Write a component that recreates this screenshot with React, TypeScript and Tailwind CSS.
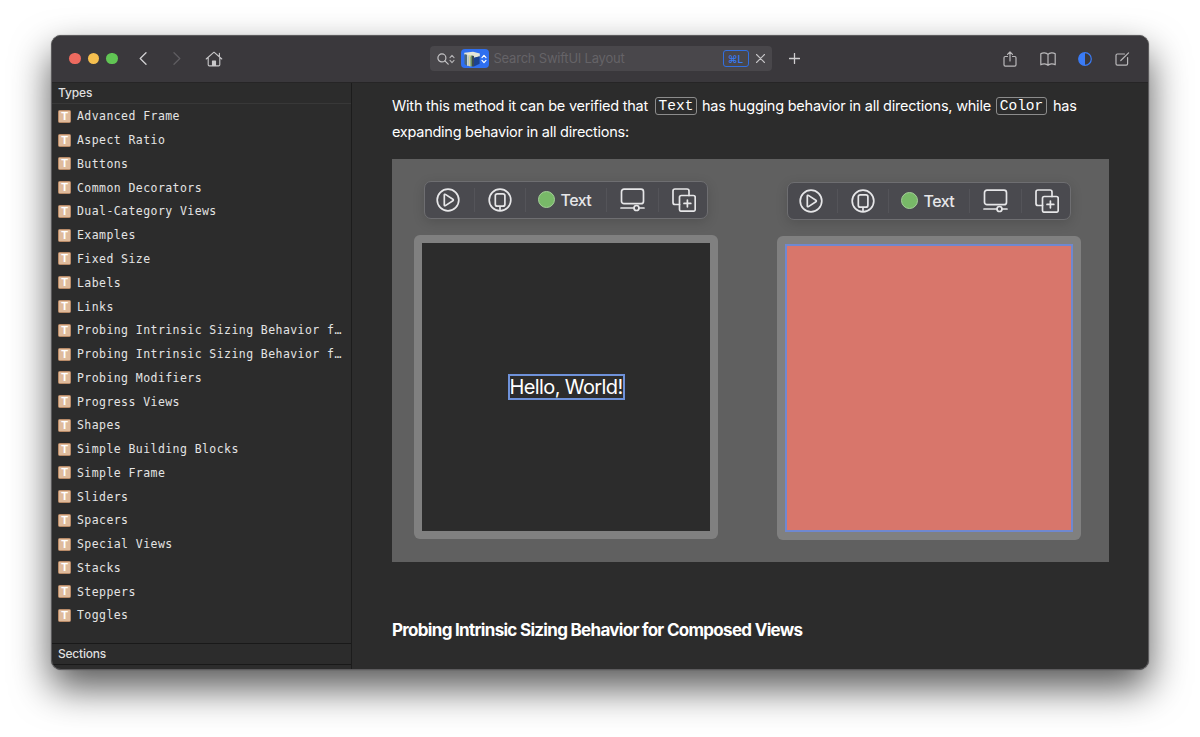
import type { ReactNode } from 'react';

const types = [
  'Advanced Frame',
  'Aspect Ratio',
  'Buttons',
  'Common Decorators',
  'Dual-Category Views',
  'Examples',
  'Fixed Size',
  'Labels',
  'Links',
  'Probing Intrinsic Sizing Behavior f…',
  'Probing Intrinsic Sizing Behavior f…',
  'Probing Modifiers',
  'Progress Views',
  'Shapes',
  'Simple Building Blocks',
  'Simple Frame',
  'Sliders',
  'Spacers',
  'Special Views',
  'Stacks',
  'Steppers',
  'Toggles',
];

function Stepper({ className }: { className: string }) {
  return (
    <svg className={className} viewBox="0 0 6 10" fill="none" stroke="currentColor" strokeWidth="1.2" strokeLinecap="round" strokeLinejoin="round">
      <path d="M1 3.6 3 1.4l2 2.2M1 6.4l2 2.2 2-2.2" />
    </svg>
  );
}

function TitleBar() {
  return (
    <div className="flex h-[47px] shrink-0 items-center border-b border-[#262526] bg-[#3a383c]">
      <div className="ml-[17px] flex gap-[7px]">
        <div className="h-[11.5px] w-[11.5px] rounded-full bg-[#ed6a5f]" />
        <div className="h-[11.5px] w-[11.5px] rounded-full bg-[#f5bf4f]" />
        <div className="h-[11.5px] w-[11.5px] rounded-full bg-[#61c554]" />
      </div>
      <svg className="ml-[21px] h-[13px] w-[8px] text-[#d2d1d3]" viewBox="0 0 8 13" fill="none" stroke="currentColor" strokeWidth="1.3" strokeLinecap="round" strokeLinejoin="round">
        <path d="M7 .8 1.2 6.5 7 12.2" />
      </svg>
      <svg className="ml-[26px] h-[13px] w-[8px] text-[#5f5d61]" viewBox="0 0 8 13" fill="none" stroke="currentColor" strokeWidth="1.3" strokeLinecap="round" strokeLinejoin="round">
        <path d="M1 .8 6.8 6.5 1 12.2" />
      </svg>
      <svg className="ml-[24.5px] h-4 w-[18px] text-[#c9c8ca]" viewBox="0 0 18 16" fill="none" stroke="currentColor" strokeWidth="1.1" strokeLinecap="round" strokeLinejoin="round">
        <path d="M1.2 8 9 1.2 16.8 8M3.2 6.6v7.2c0 .7.4 1.1 1.1 1.1h9.4c.7 0 1.1-.4 1.1-1.1V6.6M14.4 5.6V2.3" />
        <path d="M7.5 14.5V10h3v4.5z" fill="currentColor" />
      </svg>

      <div className="ml-[206.5px] flex h-[25px] w-[342px] items-center rounded-[4px] bg-[#49474b]">
        <svg className="ml-[7px] h-3 w-3 text-[#c4c3c5]" viewBox="0 0 12 12" fill="none" stroke="currentColor" strokeWidth="1.2" strokeLinecap="round">
          <circle cx="4.9" cy="4.9" r="4" />
          <path d="m7.9 7.9 3.3 3.3" />
        </svg>
        <Stepper className="h-[10px] w-[6px] text-[#b0afb1]" />
        <div className="ml-[6px] flex h-[19px] w-[28px] items-center rounded-[4px] bg-[#2f6ff0]">
          {/* row of books */}
          <svg className="ml-[3px] h-4 w-4" viewBox="0 0 16 16">
            <path d="M.3 1.800 9 .8l6.800 1.600v3L9.500 7 .3 4z" fill="#e4e6d8" />
            <path d="M.5 3 3 3.800v11L.5 13z" fill="#4d6878" />
            <path d="m3 3.800 1.800.3v11L3 14.800z" fill="#c9d3d2" />
            <path d="m4.800 4.100 1.900.3v11l-1.900-.3z" fill="#dad594" />
            <path d="m6.700 4.400 1.300.2v10.800l-1.300-.1z" fill="#6f9458" />
            <path d="m8 4.600 2 .3v10.600l-2-.1z" fill="#3c4a56" />
            <path d="m10 6.800 5.600-1.500v7.400L10 15.500z" fill="#1b438f" />
          </svg>
          <Stepper className="ml-[1px] h-[10px] w-[6px] text-white" />
        </div>
        <span className="ml-[5px] w-[229px] whitespace-nowrap font-['Inter'] text-[13px] leading-none tracking-[-0.22px] text-[#656367]">
          Search SwiftUI Layout
        </span>
        <div className="flex h-[17px] w-[26px] items-center justify-center rounded-[3px] border border-[#326fdf] font-['Inter'] text-[10px] font-medium leading-none text-[#377bf5]">
          ⌘L
        </div>
        <svg className="ml-[7px] h-[9px] w-[9px] text-[#c4c3c5]" viewBox="0 0 9 9" stroke="currentColor" strokeWidth="1.1" strokeLinecap="round">
          <path d="m.5.5 8 8m0-8-8 8" />
        </svg>
      </div>
      <svg className="ml-[17px] h-[11px] w-[11px] text-[#cfced0]" viewBox="0 0 11 11" stroke="currentColor" strokeWidth="1.3" strokeLinecap="round">
        <path d="M5.5.5v10m-5-5h10" />
      </svg>

      <div className="ml-auto mr-[18px] flex items-center text-[#b9b8ba]">
        <svg className="h-4 w-[14px]" viewBox="0 0 14 16" fill="none" stroke="currentColor" strokeWidth="1.2" strokeLinecap="round" strokeLinejoin="round">
          <path d="M4.5 5.500H2.300c-.8 0-1.300.5-1.300 1.300v7c0 .8.5 1.300 1.300 1.300h9.400c.8 0 1.300-.5 1.300-1.300v-7c0-.8-.5-1.300-1.300-1.300H9.500M7 10V1M4.500 3.400 7 .9l2.500 2.500" />
        </svg>
        <svg className="ml-[23px] h-[14px] w-4" viewBox="0 0 16 14" fill="none" stroke="currentColor" strokeWidth="1.2" strokeLinecap="round" strokeLinejoin="round">
          <path d="M8 2.400C6.300.5 2.800.3.8 1.800v11c2.200-1.400 5.500-1.100 7.200.5 1.700-1.600 5-1.900 7.200-.5v-11C13.200.3 9.700.5 8 2.400zm0 0v10.900" />
        </svg>
        <svg className="ml-[22px] h-[14px] w-[14px] text-[#3a7bf6]" viewBox="0 0 14 14">
          <circle cx="7" cy="7" r="6.3" fill="none" stroke="currentColor" strokeWidth="1.2" />
          <path d="M7 .7a6.300 6.300 0 0 0 0 12.600z" fill="currentColor" />
        </svg>
        <svg className="ml-[23px] h-[14px] w-[15px]" viewBox="0 0 15 14" fill="none" stroke="currentColor" strokeWidth="1.2" strokeLinecap="round" strokeLinejoin="round">
          <path d="M9.500 2H2.400C1.500 2 1 2.500 1 3.400v8.400c0 .9.500 1.400 1.400 1.400h8.800c.9 0 1.400-.5 1.400-1.400V5.500M5.800 8.500 13.600.9" />
        </svg>
      </div>
    </div>
  );
}

function Sidebar() {
  return (
    <div className="flex w-[300px] shrink-0 flex-col border-r border-[#1c1c1c]">
      <div className="flex h-[21px] shrink-0 items-center border-b border-[#383838] pl-[6px] pt-[1px] font-['Inter'] text-[12px] font-medium tracking-[-0.1px] text-[#dfdfdf]">
        Types
      </div>
      <ul className="pt-[1px]">
        {types.map((name, i) => (
          <li key={i} className="flex h-[23.77px] items-center pl-[6px]">
            <span className="mr-[6px] flex h-[13px] w-[13px] shrink-0 items-center justify-center rounded-[1.5px] border border-[#b98b68] bg-[#dfbb9c] font-['Liberation_Sans'] text-[11px] font-bold leading-none text-white">
              T
            </span>
            <span className="whitespace-nowrap font-['DejaVu_Sans_Mono'] text-[11.5px] leading-4 tracking-[0.43px] text-[#e4e4e4]">
              {name}
            </span>
          </li>
        ))}
      </ul>
      <div className="mt-auto flex h-[22px] shrink-0 items-center border-y border-[#191919] pl-[6px] font-['Inter'] text-[12px] font-medium tracking-[-0.22px] text-[#dfdfdf]">
        Sections
      </div>
      <div className="h-[4px] shrink-0" />
    </div>
  );
}

function Separator() {
  return <div className="h-6 w-px bg-[#545459]" />;
}

function PreviewBar() {
  return (
    <div className="flex h-[38px] w-[284px] items-center rounded-[7px] border border-[#6e6e71] bg-[#4a4a4f] text-[#e6e6e8] shadow-[0_3px_12px_rgba(0,0,0,0.15)]">
      <svg className="ml-[11px] mr-[14px] h-6 w-6" viewBox="0 0 24 24" fill="none" stroke="currentColor" strokeWidth="1.7" strokeLinejoin="round">
        <circle cx="12" cy="12" r="10.8" />
        <path d="M8.300 7.100v9.800c0 .8.500 1 1.100.7l7.500-4.800c.6-.4.6-1.200 0-1.600L9.400 6.400c-.6-.3-1.100-.1-1.100.7z" />
      </svg>
      <Separator />
      <svg className="mx-[13px] h-6 w-6" viewBox="0 0 24 24" fill="none" stroke="currentColor" strokeWidth="1.7">
        <circle cx="12" cy="12" r="10.8" />
        <rect x="7.3" y="5.8" width="9.6" height="12.4" rx="2" />
        <path d="M12 18.200v4.600" />
      </svg>
      <Separator />
      <div className="ml-[11.5px] h-[17px] w-[17px] rounded-full border border-[#a4cf98] bg-[#78b968]" />
      <span className="ml-[6px] w-[45.5px] whitespace-nowrap font-['Inter'] text-[16px] font-medium leading-none tracking-[-0.55px]">Text</span>
      <Separator />
      <svg className="mx-[13px] h-6 w-[25px]" viewBox="0 0 25 24" fill="none" stroke="currentColor" strokeWidth="1.7" strokeLinecap="round">
        <rect x="1.5" y="1.2" width="22" height="14.5" rx="2.5" />
        <path d="M1 20h12.500m6 0H24" />
        <circle cx="16.5" cy="20" r="2.5" />
      </svg>
      <Separator />
      <svg className="ml-[13px] h-6 w-6" viewBox="0 0 24 24" fill="none" stroke="currentColor" strokeWidth="1.7" strokeLinecap="round">
        <path d="M7.500 16.500H3c-1.300 0-2-.7-2-2V3c0-1.300.7-2 2-2h12c1.300 0 2 .7 2 2v4.500" />
        <rect x="7.5" y="7.5" width="15.7" height="15.7" rx="1.8" />
        <path d="M15.400 12v6.800M12 15.400h6.800" />
      </svg>
    </div>
  );
}

function Preview({ children }: { children: ReactNode }) {
  return (
    <div className="flex w-[304px] flex-col items-center">
      <PreviewBar />
      <div className="mt-[16px] flex h-[304px] w-[304px] rounded-[6px] bg-[#808080] p-2">{children}</div>
    </div>
  );
}

function Code({ children, className }: { children: string; className: string }) {
  return (
    <code className={`${className} mt-[1px] inline-flex h-[18px] items-center justify-center rounded-[3px] border border-[#8c8c8c] pt-[2px] font-['Liberation_Mono'] text-[14.5px] leading-none text-white`}>
      {children}
    </code>
  );
}

export default function App() {
  return (
    <div className="h-[737px] w-full overflow-hidden bg-white pl-[51px] pt-[34.5px]">
      <div className="flex h-[635px] w-[1098px] flex-col overflow-hidden rounded-[10px] border border-[#5c5b5d] bg-[#2c2c2c] shadow-[0_18px_38px_rgba(0,0,0,0.66),0_0_1px_rgba(0,0,0,0.6)]">
        <TitleBar />
        <div className="flex min-h-0 flex-1">
          <Sidebar />
          <main className="flex-1 pl-[40px] font-['Inter'] text-white">
            <div className="pt-[9px] text-[14.5px] leading-[27px]">
              <div className="flex h-[27px] items-center whitespace-nowrap">
                <span className="w-[263px] tracking-[-0.22px]">With this method it can be verified that</span>
                <Code className="w-[42px]">Text</Code>
                <span className="ml-[5px] w-[294px] tracking-[-0.23px]">has hugging behavior in all directions, while</span>
                <Code className="w-[51px]">Color</Code>
                <span className="ml-[6px] tracking-[-0.25px]">has</span>
              </div>
              <div className="-mt-[0.5px] tracking-[-0.26px]">expanding behavior in all directions:</div>
            </div>
            <div className="mt-[13.5px] flex h-[403px] w-[717px] gap-[59px] bg-[#606060] pl-[22px] pt-[22px]">
              <Preview>
                <div className="flex flex-1 items-center justify-center bg-[#2c2c2c] pt-[1px]">
                  <span className="flex h-[26px] w-[117px] items-center justify-center whitespace-nowrap border-2 border-[#6f92da] text-[20px] leading-none tracking-[-0.6px]">
                    Hello, World!
                  </span>
                </div>
              </Preview>
              <div className="pt-[1px]">
                <Preview>
                  <div className="flex-1 border-2 border-[#6f88d0] bg-[#d8766b]" />
                </Preview>
              </div>
            </div>
            <h2 className="mt-[55px] whitespace-nowrap text-[17px] font-bold leading-[26px] tracking-[-0.7px]">
              Probing Intrinsic Sizing Behavior for Composed Views
            </h2>
          </main>
        </div>
      </div>
    </div>
  );
}
